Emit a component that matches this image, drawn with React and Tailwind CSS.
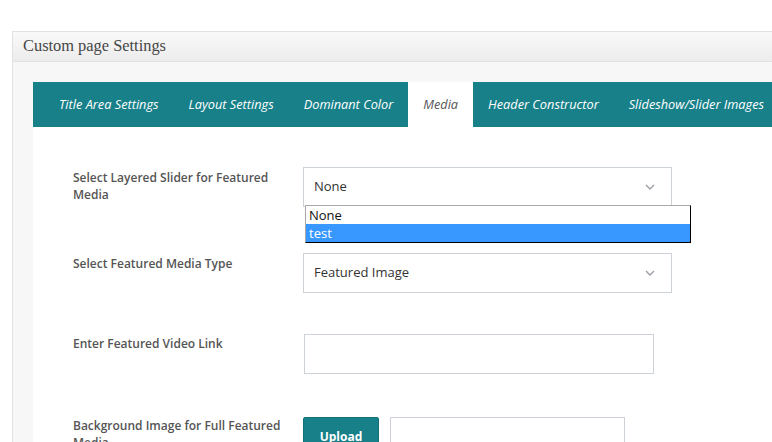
import React from "react";

const tabs = [
  "Title Area Settings",
  "Layout Settings",
  "Dominant Color",
  "Media",
  "Header Constructor",
  "Slideshow/Slider Images",
];

function Chevron() {
  return (
    <svg width="10" height="6" viewBox="0 0 10 6" className="shrink-0">
      <path d="M1 1l4 4 4-4" fill="none" stroke="#9a9ea6" strokeWidth="1.4" />
    </svg>
  );
}

function Select({ value }) {
  return (
    <div className="flex h-[40px] w-[369px] items-center justify-between border border-[#ccd2d8] bg-white pl-[10px] pr-[16px] text-[13px] text-[#333]">
      <span>{value}</span>
      <Chevron />
    </div>
  );
}

export default function App() {
  return (
    <div
      className="h-[442px] w-[772px] overflow-hidden bg-white pt-[31px] pl-[12px]"
      style={{ fontFamily: "'Open Sans', sans-serif" }}
    >
      <div className="w-[800px] border border-[#e2e2e2] bg-[#f7f7f7]">
        <div className="flex h-[30px] items-center border-b border-[#e2e2e2] bg-gradient-to-b from-[#f9f9f9] to-[#ececec] pl-[10px]">
          <span
            className="text-[16.4px] text-[#464646]"
            style={{ fontFamily: "'Liberation Serif', serif" }}
          >
            Custom page Settings
          </span>
        </div>
        <div className="pt-[20px] pl-[20px]">
          <div className="bg-white h-[400px]">
            <div className="flex h-[45px] items-stretch bg-[#188089] pl-[11px]">
              {tabs.map((t) => (
                <div
                  key={t}
                  className={
                    t === "Media"
                      ? "flex items-center whitespace-nowrap bg-white px-[15px] text-[12.76px] italic text-[#555]"
                      : "flex items-center whitespace-nowrap px-[15px] text-[12.76px] italic text-white"
                  }
                >
                  {t}
                </div>
              ))}
            </div>
            <div className="pt-[40px] pl-[40px]">
              <div className="relative flex">
                <div className="w-[230px] pt-[2px] pr-[20px] text-[12px] font-semibold leading-[17px] text-[#555]">
                  Select Layered Slider for Featured Media
                </div>
                <Select value="None" />
                <div className="absolute left-[232px] top-[38px] w-[386px] border-t border-l border-t-[#a8a8a8] border-l-[#a8a8a8] border-r border-b border-r-black border-b-black bg-white text-[13px] leading-[18px]">
                  <div className="pl-[3px] text-[#111]">None</div>
                  <div className="bg-[#3898ff] pl-[3px] text-white">test</div>
                </div>
              </div>
              <div className="mt-[46px] flex">
                <div className="w-[230px] pt-[2px] pr-[20px] text-[12px] font-semibold leading-[17px] text-[#555]">
                  Select Featured Media Type
                </div>
                <Select value="Featured Image" />
              </div>
              <div className="mt-[41px] flex">
                <div className="w-[231px] pt-[1px] pr-[20px] text-[12px] font-semibold leading-[17px] text-[#555]">
                  Enter Featured Video Link
                </div>
                <div className="h-[40px] w-[350px] border border-[#ccd2d8] bg-white"></div>
              </div>
              <div className="mt-[43px] flex">
                <div className="w-[230px] pt-[0px] pr-[20px] text-[12px] font-semibold leading-[17px] text-[#555]">
                  Background Image for Full Featured Media
                </div>
                <button className="h-[40px] w-[76px] rounded-[2px] border border-[#13707a] bg-[#188089] text-[12px] font-bold text-white">
                  Upload
                </button>
                <div className="ml-[11px] h-[40px] w-[235px] border border-[#ccd2d8] bg-white"></div>
              </div>
            </div>
          </div>
        </div>
      </div>
    </div>
  );
}
